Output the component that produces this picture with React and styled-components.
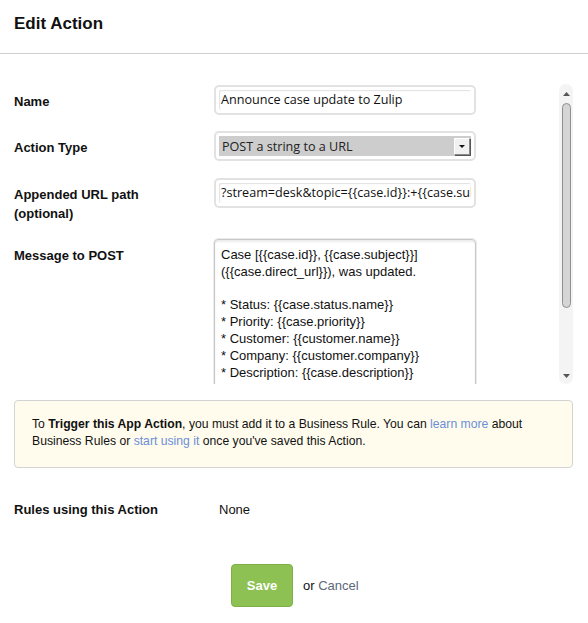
import React from "react";
import styled, { createGlobalStyle } from "styled-components";

const GlobalStyle = createGlobalStyle`
  html, body {
    margin: 0;
    padding: 0;
    background: #fff;
  }
  body {
    font-family: "Liberation Sans", Arial, sans-serif;
    font-size: 13px;
    color: #111;
  }
`;

const Page = styled.div`
  width: 588px;
  height: 623px;
  overflow: hidden;
`;

const Header = styled.div`
  height: 54px;
  border-bottom: 1px solid #cfcfcf;
  display: flex;
  align-items: center;
  padding: 0 14px 6px;
  box-sizing: border-box;
`;

const Title = styled.h2`
  margin: 0;
  font-size: 17px;
  font-weight: 700;
`;

const ScrollArea = styled.div`
  margin-top: 30px;
  height: 300px;
  display: flex;
  padding-left: 14px;
  padding-right: 15px;
`;

const Content = styled.div`
  flex: 1;
  overflow: hidden;
  padding-top: 1px;
`;

const Row = styled.div`
  display: flex;
  align-items: flex-start;
  margin-bottom: ${(p) => p.gap || 15}px;
`;

const Label = styled.label`
  width: 200px;
  font-weight: 700;
  font-size: 13px;
  line-height: 19px;
  padding-top: 7px;
  padding-right: 8px;
  box-sizing: border-box;
`;

const Field = styled.div`
  width: 262px;
  height: 30px;
  box-sizing: border-box;
  border: 2px solid #e2e2e2;
  border-radius: 5px;
  background: #fff;
  padding: 3px;
  display: flex;
`;

const Input = styled.div`
  flex: 1;
  border-radius: 2px;
  box-shadow: inset 1px 1px 1px rgba(0, 0, 0, 0.12);
  font-family: "Open Sans", sans-serif;
  font-size: 12.6px;
  line-height: 20px;
  padding: 0 3px 0 2px;
  white-space: nowrap;
  overflow: hidden;
  color: #111;
`;

const Select = styled.div`
  flex: 1;
  display: flex;
  align-items: stretch;
  background: #cdcdcd;
  font-family: "Open Sans", sans-serif;
  font-size: 12.6px;
  line-height: 21px;
  color: #222;
`;

const SelectText = styled.span`
  flex: 1;
  padding-left: 3px;
`;

const SelectArrow = styled.span`
  width: 14px;
  margin: 2px 1px 1px 0;
  background: #f1f1f1;
  border: 1px solid #8a8a8a;
  border-top-color: #fff;
  border-left-color: #fff;
  box-shadow: 1px 1px 0 #555;
  display: flex;
  align-items: center;
  justify-content: center;
`;

const TextArea = styled.div`
  width: 262px;
  height: 200px;
  box-sizing: border-box;
  border: 1px solid #c8c8c8;
  border-radius: 4px;
  box-shadow: inset 0 2px 2px rgba(0, 0, 0, 0.08), 0 0 0 1px #ececec;
  padding: 7px 6px;
  font-size: 13px;
  line-height: 16.8px;
  white-space: pre-wrap;
  color: #111;
`;

const ScrollTrack = styled.div`
  width: 14px;
  background: #f4f4f4;
  border-radius: 7px;
  display: flex;
  flex-direction: column;
  align-items: center;
  padding: 8px 0 6px;
  box-sizing: border-box;
`;

const ScrollThumb = styled.div`
  width: 9px;
  height: 205px;
  margin-top: 7px;
  background: #d5d5d5;
  border: 1px solid #8f8f8f;
  border-radius: 5px;
  box-sizing: border-box;
`;

const Spacer = styled.div`
  flex: 1;
`;

const Notice = styled.div`
  margin: 16px 15px 0 14px;
  background: #fffcee;
  border: 1px solid #d3d3d3;
  border-radius: 4px;
  padding: 15px 17px 17px;
  font-size: 12.2px;
  line-height: 17px;
  color: #111;
`;

const Link = styled.a`
  color: #6b8fd6;
  text-decoration: none;
`;

const RulesRow = styled.div`
  display: flex;
  padding: 0 14px;
  margin-top: 32px;
  font-size: 13px;
  line-height: 19px;
`;

const RulesLabel = styled.span`
  width: 205px;
  font-weight: 700;
`;

const Actions = styled.div`
  display: flex;
  align-items: center;
  padding-left: 231px;
  margin-top: 45px;
  gap: 10px;
  font-size: 13px;
`;

const SaveButton = styled.button`
  width: 62px;
  height: 43px;
  background: #8dc153;
  border: 1px solid #7eb045;
  border-radius: 4px;
  color: #fff;
  font-family: "Liberation Sans", Arial, sans-serif;
  font-weight: 700;
  font-size: 13px;
  cursor: pointer;
`;

const Cancel = styled.a`
  color: #5b6878;
  text-decoration: none;
`;

const Arrow = ({ up }) => (
  <svg width="7" height="4" viewBox="0 0 7 4">
    <polygon points={up ? "0,4 7,4 3.5,0" : "0,0 7,0 3.5,4"} fill="#555" />
  </svg>
);

const message = `Case [{{case.id}}, {{case.subject}}]
({{case.direct_url}}), was updated.

* Status: {{case.status.name}}
* Priority: {{case.priority}}
* Customer: {{customer.name}}
* Company: {{customer.company}}
* Description: {{case.description}}`;

const App = () => {
  return (
    <Page>
      <GlobalStyle />
      <Header>
        <Title>Edit Action</Title>
      </Header>
      <ScrollArea>
        <Content>
          <Row gap={16}>
            <Label>Name</Label>
            <Field>
              <Input>Announce case update to Zulip</Input>
            </Field>
          </Row>
          <Row gap={17}>
            <Label>Action Type</Label>
            <Field>
              <Select>
                <SelectText>POST a string to a URL</SelectText>
                <SelectArrow>
                  <svg width="6" height="3" viewBox="0 0 6 3">
                    <polygon points="0,0 6,0 3,3" fill="#111" />
                  </svg>
                </SelectArrow>
              </Select>
            </Field>
          </Row>
          <Row gap={16}>
            <Label>
              Appended URL path
              <br />
              (optional)
            </Label>
            <Field>
              <Input>?stream=desk&amp;topic={"{{case.id}}"}:+{"{{case.subject}}"}</Input>
            </Field>
          </Row>
          <Row>
            <Label>Message to POST</Label>
            <TextArea>{message}</TextArea>
          </Row>
        </Content>
        <ScrollTrack>
          <Arrow up />
          <ScrollThumb />
          <Spacer />
          <Arrow />
        </ScrollTrack>
      </ScrollArea>
      <Notice>
        To <b>Trigger this App Action</b>, you must add it to a Business Rule. You can{" "}
        <Link href="#">learn more</Link> about Business Rules or{" "}
        <Link href="#">start using it</Link> once you've saved this Action.
      </Notice>
      <RulesRow>
        <RulesLabel>Rules using this Action</RulesLabel>
        <span>None</span>
      </RulesRow>
      <Actions>
        <SaveButton>Save</SaveButton>
        <span>
          or <Cancel href="#">Cancel</Cancel>
        </span>
      </Actions>
    </Page>
  );
};

export default App;
